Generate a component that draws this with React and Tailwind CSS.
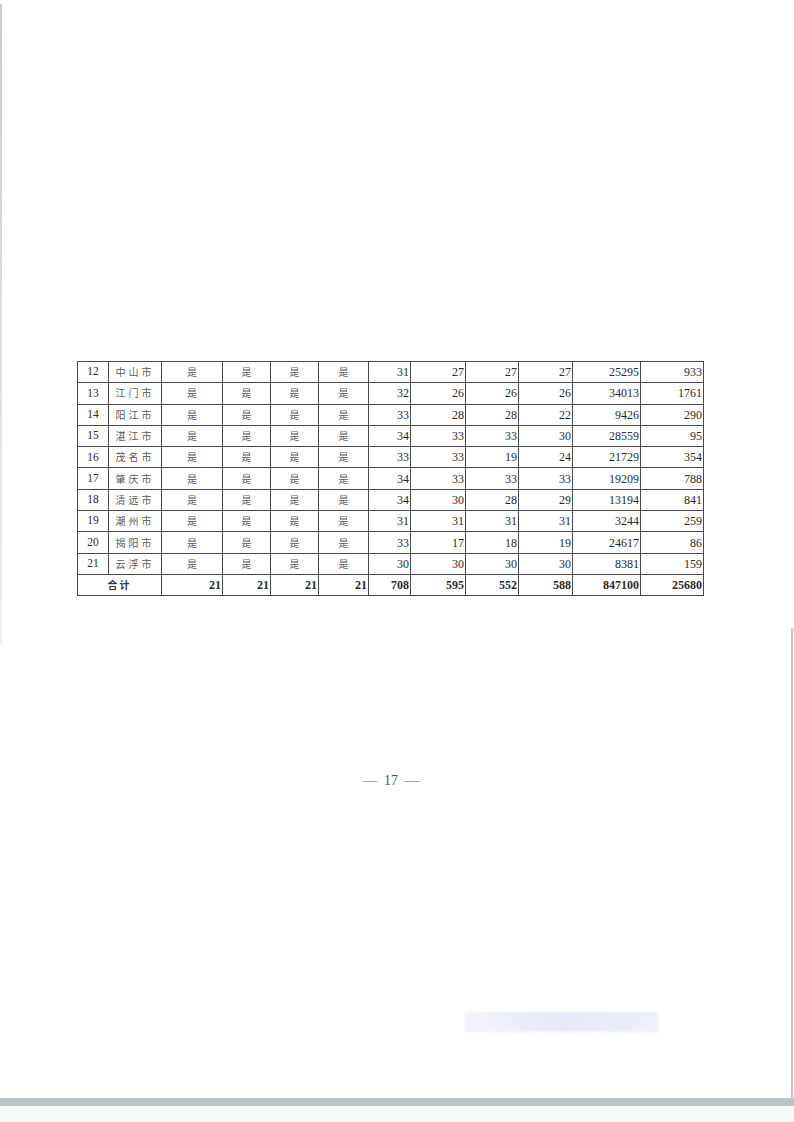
const rows = [
  ["12", "中山市", "31", "27", "27", "27", "25295", "933"],
  ["13", "江门市", "32", "26", "26", "26", "34013", "1761"],
  ["14", "阳江市", "33", "28", "28", "22", "9426", "290"],
  ["15", "湛江市", "34", "33", "33", "30", "28559", "95"],
  ["16", "茂名市", "33", "33", "19", "24", "21729", "354"],
  ["17", "肇庆市", "34", "33", "33", "33", "19209", "788"],
  ["18", "清远市", "34", "30", "28", "29", "13194", "841"],
  ["19", "潮州市", "31", "31", "31", "31", "3244", "259"],
  ["20", "揭阳市", "33", "17", "18", "19", "24617", "86"],
  ["21", "云浮市", "30", "30", "30", "30", "8381", "159"],
];

const totals = ["21", "21", "21", "21", "708", "595", "552", "588", "847100", "25680"];

const widths = [31, 53, 61, 48, 48, 50, 42, 55, 53, 54, 68, 63];

const cell = "border border-[#4a4a4a] h-[21.3px] p-0 leading-none";
const num = cell + " text-right pr-[1px] text-[12px] text-[#2a2a2a]";
const cjk = cell + " text-center text-[10px] text-[#5a5a5a] font-['Noto_Sans_CJK_SC',sans-serif]";

export default function App() {
  return (
    <div className="relative w-[794px] h-[1122px] bg-white overflow-hidden font-['Liberation_Serif',serif]">
      {/* scan edges */}
      <div className="absolute left-0 top-[4px] w-[2px] h-[640px] bg-gradient-to-b from-[#c9cccf] to-[#eef0f0]" />
      <div className="absolute left-[791px] top-[628px] w-[2px] h-[472px] bg-[#c3c7ca]" />

      <div className="flex flex-col h-full">
        <div className="pt-[361px] pl-[77px]">
          <table className="table-fixed border-collapse w-[626px]">
            <colgroup>
              {widths.map((w, i) => (
                <col key={i} style={{ width: w }} />
              ))}
            </colgroup>
            <tbody>
              {rows.map((r) => (
                <tr key={r[0]}>
                  <td className={cell + " text-center text-[11.5px] text-[#2a2a2a]"}>{r[0]}</td>
                  <td className={cjk + " tracking-[3px]"}>{r[1]}</td>
                  <td className={cjk}>是</td>
                  <td className={cjk}>是</td>
                  <td className={cjk}>是</td>
                  <td className={cjk}>是</td>
                  {r.slice(2).map((v, i) => (
                    <td key={i} className={num}>{v}</td>
                  ))}
                </tr>
              ))}
              <tr>
                <td colSpan={2} className={cjk + " font-bold text-[#333] tracking-[2px]"}>合计</td>
                {totals.map((v, i) => (
                  <td key={i} className={num + " font-bold text-[10.5px]"}>{v}</td>
                ))}
              </tr>
            </tbody>
          </table>
        </div>

        <div className="mt-[178px] pr-[12px] text-center text-[14px] text-[#555] leading-none whitespace-pre">—  17  —</div>

        <div className="mt-[224px] ml-[465px] w-[193px] h-[20px] bg-gradient-to-r from-[#f3f4fb] via-[#e6e8f8] to-[#eef0fa] blur-[1px]" />

        <div className="mt-[66px] h-[8px] w-full bg-[#bcc3c7]" />
        <div className="flex-1 bg-[#f9fafa]" />
      </div>
    </div>
  );
}
